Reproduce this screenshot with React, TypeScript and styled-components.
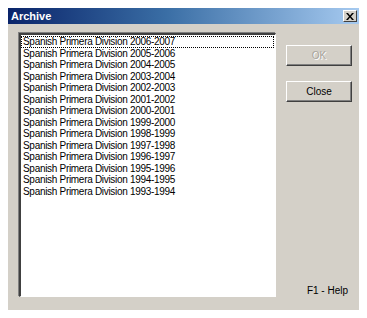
import styled, { createGlobalStyle } from 'styled-components';

const seasons = [
  '2006-2007', '2005-2006', '2004-2005', '2003-2004', '2002-2003', '2001-2002', '2000-2001',
  '1999-2000', '1998-1999', '1997-1998', '1996-1997', '1995-1996', '1994-1995', '1993-1994',
];

const GlobalStyle = createGlobalStyle`
  body {
    margin: 8px;
    background: #ffffff;
    font-family: "Liberation Sans", Arial, sans-serif;
  }
`;

const Window = styled.div`
  width: 351px;
  height: 302px;
  background: #d4d0c8;
  display: flex;
  flex-direction: column;
`;

const TitleBar = styled.div`
  height: 16px;
  display: flex;
  align-items: center;
  justify-content: space-between;
  padding: 0 2px 0 3px;
  background: linear-gradient(to right, #0a246a 0%, #3a6ea5 45%, #a6caf0 100%);
`;

const Title = styled.span`
  color: #ffffff;
  font-weight: 700;
  font-size: 11px;
`;

const CloseBox = styled.div`
  width: 14px;
  height: 12px;
  box-sizing: border-box;
  background: #d4d0c8;
  border-top: 1px solid #ffffff;
  border-left: 1px solid #ffffff;
  border-right: 1px solid #404040;
  border-bottom: 1px solid #404040;
  display: flex;
  align-items: center;
  justify-content: center;
`;

const Body = styled.div`
  flex: 1;
  display: flex;
  gap: 10px;
  padding: 9px 7px 13px 11px;
`;

const ListBox = styled.div`
  width: 257px;
  box-sizing: border-box;
  background: #ffffff;
  border-top: 2px solid #404040;
  border-left: 2px solid #404040;
  border-right: 1px solid #ffffff;
  border-bottom: 1px solid #ffffff;
  box-shadow: -1px -1px 0 #808080, 1px 1px 0 #d4d0c8;
  padding-top: 1px;
`;

const Row = styled.div<{ focused?: boolean }>`
  height: 11.5px;
  line-height: 11.5px;
  font-size: 10px;
  letter-spacing: -0.3px;
  color: #000000;
  padding-left: 2px;
  margin-right: 1px;
  white-space: nowrap;
  outline: ${(p) => (p.focused ? '1px dotted #000' : 'none')};
  outline-offset: -1px;
`;

const Side = styled.div`
  width: 66px;
  display: flex;
  flex-direction: column;
  padding-top: 12px;
  gap: 15px;
`;

const Button = styled.div<{ disabled?: boolean }>`
  height: 21px;
  box-sizing: border-box;
  display: flex;
  align-items: center;
  justify-content: center;
  font-size: 10px;
  color: ${(p) => (p.disabled ? '#a8a49c' : '#000000')};
  text-shadow: ${(p) => (p.disabled ? '1px 1px 0 #ffffff' : 'none')};
  border-top: 1px solid #ffffff;
  border-left: 1px solid #ffffff;
  border-right: 1px solid #404040;
  border-bottom: 1px solid #404040;
  box-shadow: inset -1px -1px 0 #808080;
`;

const Help = styled.div`
  margin-top: auto;
  text-align: right;
  font-size: 10px;
  padding-right: 4px;
  margin-bottom: 1px;
`;

export default function App() {
  return (
    <>
      <GlobalStyle />
      <Window>
        <TitleBar>
          <Title>Archive</Title>
          <CloseBox>
            <svg width="8" height="7" viewBox="0 0 8 7">
              <path d="M0 0h2l2 2.5L6 0h2L5 3.5 8 7H6L4 4.5 2 7H0l3-3.5z" fill="#000" />
            </svg>
          </CloseBox>
        </TitleBar>
        <Body>
          <ListBox>
            {seasons.map((s, i) => (
              <Row key={s} focused={i === 0}>
                Spanish Primera Division {s}
              </Row>
            ))}
          </ListBox>
          <Side>
            <Button disabled>OK</Button>
            <Button>Close</Button>
            <Help>F1 - Help</Help>
          </Side>
        </Body>
      </Window>
    </>
  );
}
